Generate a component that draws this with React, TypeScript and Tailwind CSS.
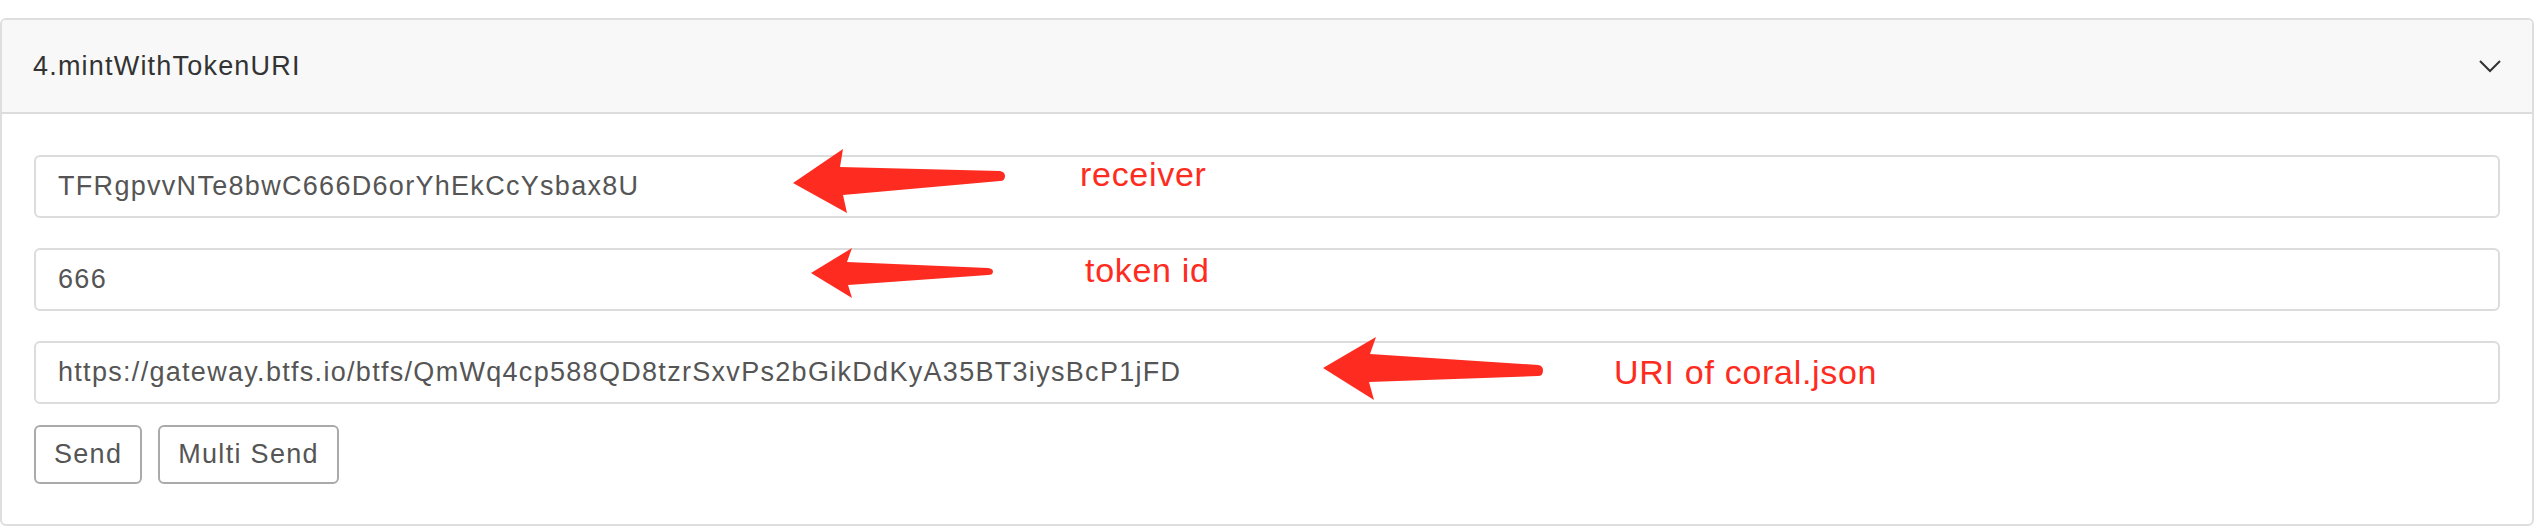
import React from 'react';

const fields = [
  'TFRgpvvNTe8bwC666D6orYhEkCcYsbax8U',
  '666',
  'https://gateway.btfs.io/btfs/QmWq4cp588QD8tzrSxvPs2bGikDdKyA35BT3iysBcP1jFD',
];

// red callouts drawn on top of the form
const notes = [
  { label: 'receiver', className: 'left-[1080px] top-[157px]' },
  { label: 'token id', className: 'left-[1085px] top-[253px]' },
  { label: 'URI of coral.json', className: 'left-[1614px] top-[355px]' },
];

export default function App() {
  return (
    <div
      className="relative w-[2534px] h-[526px] bg-white pt-[18px]"
      style={{ fontFamily: '"Liberation Sans", Arial, sans-serif' }}
    >
      <div className="h-[508px] flex flex-col border-2 border-[#dedede] rounded-[6px] overflow-hidden">
        {/* Header */}
        <div className="h-[94px] shrink-0 flex items-center justify-between bg-[#f8f8f8] border-b-2 border-[#dcdcdc] pl-[31px] pr-[31px]">
          <span className="text-[27px] tracking-[1.2px] text-[#333]">4.mintWithTokenURI</span>
          <svg width="22" height="14" viewBox="0 0 22 14" fill="none">
            <polyline points="1,2 11,12 21,2" stroke="#333" strokeWidth="2" />
          </svg>
        </div>

        {/* Body */}
        <div className="flex flex-col pt-[41px] px-[32px] pb-[42px]">
          <div className="flex flex-col gap-[30px]">
            {fields.map((value, i) => (
              <input
                key={i}
                readOnly
                value={value}
                className="h-[63px] w-full border-2 border-[#dcdcdc] rounded-[6px] px-[22px] text-[27px] tracking-[1.3px] text-[#555] bg-white outline-none"
              />
            ))}
          </div>
          <div className="flex gap-[16px] mt-[21px]">
            <button className="h-[59px] px-[18px] border-2 border-[#aaa] rounded-[6px] text-[27px] tracking-[1.3px] text-[#555] bg-white">
              Send
            </button>
            <button className="h-[59px] px-[18px] border-2 border-[#aaa] rounded-[6px] text-[27px] tracking-[1.3px] text-[#555] bg-white">
              Multi Send
            </button>
          </div>
        </div>
      </div>

      {/* Arrows */}
      <svg
        className="absolute left-0 top-0 pointer-events-none"
        width="2534"
        height="526"
        viewBox="0 0 2534 526"
      >
        <path
          d="M793 183 L843 149 L840 167 L1000 171 Q1005 172 1005 176 Q1005 181 1000 181 L843 195 L847 213 Z"
          fill="#fe2c20"
        />
        <path
          d="M811 273 L852 248 L847 262 L988 268 Q993 268.5 993 271.5 Q993 275 988 275 L848 285 L852 298 Z"
          fill="#fe2c20"
        />
        <path
          d="M1323 368 L1376 337 L1370 354 L1538 365 Q1543 365.5 1543 370.5 Q1543 376 1538 376 L1369 382 L1374 400 Z"
          fill="#fe2c20"
        />
      </svg>

      {notes.map((n) => (
        <div
          key={n.label}
          className={`absolute ${n.className} text-[34px] leading-none tracking-[0.7px] text-[#fe2c20] whitespace-nowrap`}
        >
          {n.label}
        </div>
      ))}
    </div>
  );
}
